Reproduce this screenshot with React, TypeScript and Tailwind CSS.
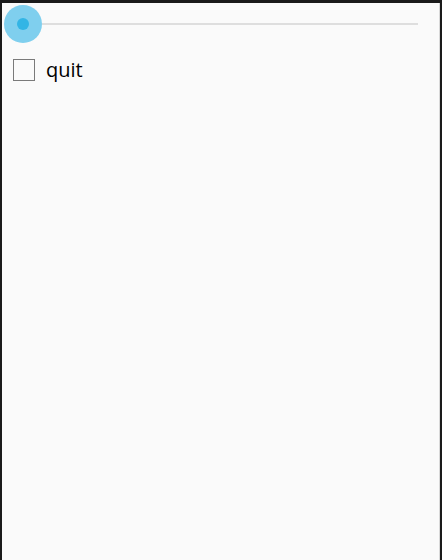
import React from 'react';

export default function App() {
  return (
    <div className="w-[442px] h-[560px] bg-[#1a1a1a] pt-[3px] pl-[2px] pr-[2px] flex">
      <div className="flex-1 bg-[#fafafa] border-r border-[#d8d8d8] flex flex-col">
        <div className="h-[42px] flex items-center pl-[2px] pr-[21px]">
          <div className="relative w-[38px] h-[38px] rounded-full bg-[#7fcfee] flex items-center justify-center shrink-0">
            <div className="w-[12px] h-[12px] rounded-full bg-[#33b5e5]" />
          </div>
          <div className="flex-1 h-[2px] bg-[#dedede]" />
        </div>
        <label className="flex items-center pl-[11px] mt-[14px] gap-[11px]">
          <span className="w-[22px] h-[22px] border border-[#7a7a7a] bg-[#fafafa]" />
          <span className="text-[20px] leading-none text-black" style={{ fontFamily: '"Open Sans", Roboto, sans-serif' }}>
            quit
          </span>
        </label>
      </div>
    </div>
  );
}
